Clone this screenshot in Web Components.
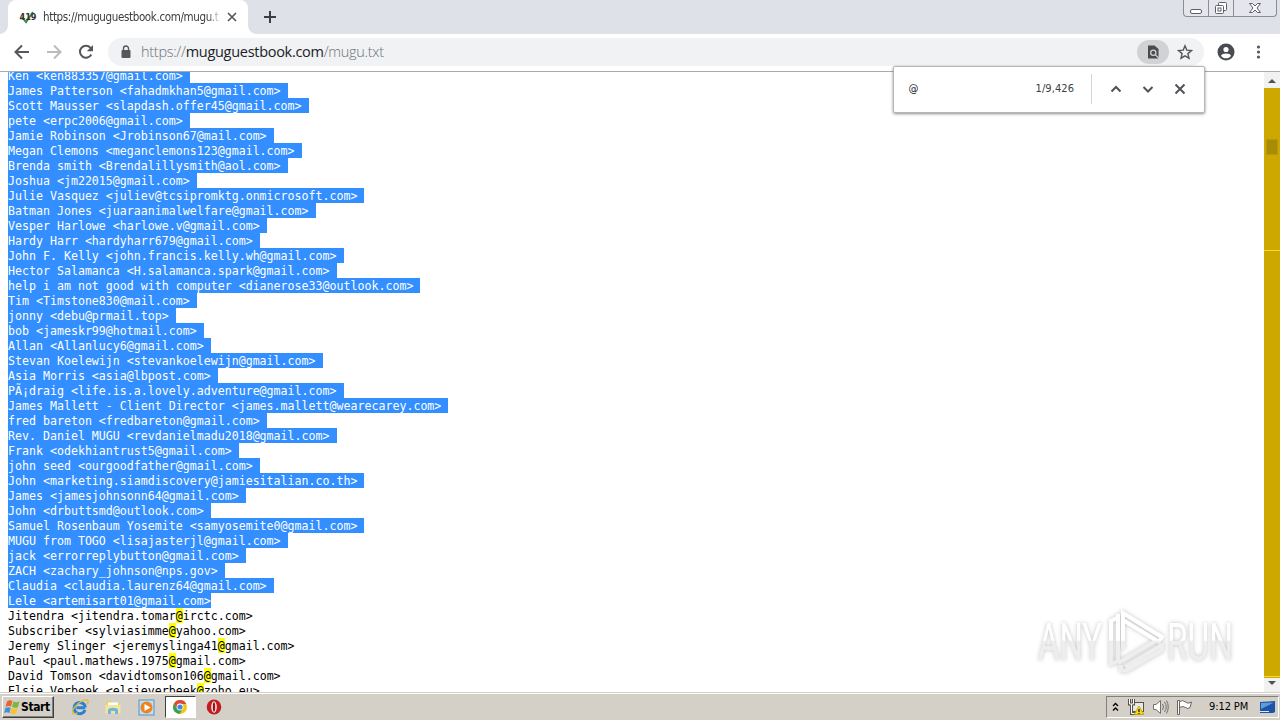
<!DOCTYPE html>
<html lang="en">
<head>
<meta charset="utf-8">
<title>mugu.txt</title>
<style>
  html, body { margin: 0; width: 1280px; height: 720px; overflow: hidden; background: #fff; }
</style>
</head>
<body>
<browser-desktop></browser-desktop>

<script>
class TabStrip extends HTMLElement {
  constructor() {
    super();
    this.attachShadow({ mode: "open" });
  }

  connectedCallback() {
    this.shadowRoot.innerHTML = /* html */`
      <style>
        :host {
          display: flex;
          height: 34px;
          background: #dee1e8;
          font: 12px/16px "DejaVu Sans Condensed", "DejaVu Sans", sans-serif;
          font-stretch: condensed;
        }
        .corner { width: 8px; align-self: flex-end; height: 8px; }
        .corner.left { background: radial-gradient(circle at 0 0, transparent 7.5px, #fff 8px); }
        .corner.right { background: radial-gradient(circle at 100% 0, transparent 7.5px, #fff 8px); }
        .tab {
          box-sizing: border-box;
          display: flex;
          align-items: center;
          width: 240px;
          padding: 0 10px 0 11px;
          border-radius: 8px 8px 0 0;
          background: #fff;
          color: #3a3c40;
        }
        .tab .title {
          width: 176px;
          margin-left: 6px;
          overflow: hidden;
          white-space: nowrap;
          font-size: 11.5px;
          letter-spacing: -.36px;
          -webkit-mask-image: linear-gradient(90deg, #000 165px, transparent 178px);
        }
        .tab .icon, .tab .close { flex: none; }
        .tab .close { margin-left: 7px; }
        .plus { margin: 10px 0 0 6px; }
        .controls {
          display: grid;
          grid-template-columns: 25px 25px 42px;
          box-sizing: border-box;
          width: 94px;
          height: 17px;
          margin: 0 3px 0 auto;
          border: 1px solid #898d98;
          border-top: 0;
          border-radius: 0 0 4px 4px;
          background: #e4e6ec;
        }
        .controls span { display: grid; place-items: center; border-right: 1px solid #898d98; }
        .controls span:last-child { border: 0; }
      </style>
      <div class="corner left"></div>
      <div class="tab">
        <svg class="icon" width="18" height="16" viewBox="0 0 18 16">
          <path d="M3 8l4 5 7-10" fill="none" stroke="#3d8a3d" stroke-width="2"/>
          <text x="0.5" y="11" font-size="9" font-weight="bold" textLength="17" lengthAdjust="spacingAndGlyphs" fill="#333">419</text>
        </svg>
        <div class="title">https://muguguestbook.com/mugu.txt</div>
        <svg class="close" width="12" height="12" viewBox="0 0 12 12"><path d="M2 2l8 8M10 2l-8 8" stroke="#55585d" stroke-width="1.7"/></svg>
      </div>
      <div class="corner right"></div>
      <svg class="plus" width="16" height="14" viewBox="0 0 16 14"><path d="M8 1v12M2 7h12" stroke="#3b3e43" stroke-width="2"/></svg>
      <div class="controls">
        <span><svg width="14" height="14"><rect x="1.5" y="8.5" width="11" height="4" rx="1.5" fill="#fff" stroke="#5b606c"/></svg></span>
        <span><svg width="14" height="14" fill="#fff" stroke="#5b606c"><rect x="4.5" y="1.5" width="8" height="8" rx="1"/><rect x="1.5" y="4.5" width="8" height="8" rx="1"/><rect x="4" y="7" width="3" height="3"/></svg></span>
        <span><svg width="14" height="14"><path d="M1.500 2.500h3l2.500 2.500 2.500-2.500h3l-3.500 4.500 3.500 4.500h-3l-2.500-2.500-2.500 2.500h-3l3.500-4.500z" fill="#fff" stroke="#5b606c"/></svg></span>
      </div>
    `;
  }
}

class NavBar extends HTMLElement {
  constructor() {
    super();
    this.attachShadow({ mode: "open" });
  }

  connectedCallback() {
    this.shadowRoot.innerHTML = /* html */`
      <style>
        :host {
          display: flex;
          box-sizing: border-box;
          align-items: center;
          height: 38px;
          padding: 0 12px 2px;
          background: #fff;
          border-bottom: 1px solid #a9abae;
          font: 14.500px/20px "Open Sans", "Noto Sans", sans-serif;
        }
        svg { display: block; flex: none; }
        .nav { display: flex; gap: 12px; }
        .address {
          display: flex;
          align-items: center;
          box-sizing: border-box;
          height: 28px;
          flex: 1;
          margin: 0 13px 0 12px;
          padding: 0 11px 0 10px;
          border-radius: 14px;
          background: #f0f2f4;
        }
        .url {
          flex: 1;
          margin-left: 7px;
          white-space: nowrap;
          font-weight: 300;
          letter-spacing: -.29px;
          color: #6d7176;
        }
        .url b { font-weight: 400; color: #202124; }
        .find {
          display: grid;
          place-items: center;
          width: 32px;
          height: 24px;
          margin-right: 8px;
          border-radius: 12px;
          background: #d0d2d4;
        }
        .dots { margin-left: 12px; }
      </style>
      <div class="nav">
        <svg width="20" height="20" viewBox="0 0 20 20" fill="none" stroke="#54575c" stroke-width="2"><path d="M17 10H4M10 3.500L3.500 10l6.500 6.500"/></svg>
        <svg width="20" height="20" viewBox="0 0 20 20" fill="none" stroke="#b9bbbe" stroke-width="2"><path d="M3 10h13M10 3.500l6.500 6.500-6.500 6.500"/></svg>
        <svg width="20" height="20" viewBox="0 0 20 20"><path d="M15.300 12.500A6 6 0 1 1 14.500 5.800l1 1.200" fill="none" stroke="#54575c" stroke-width="2"/><path d="M17 3v6.200h-6.200z" fill="#54575c"/></svg>
      </div>
      <div class="address">
        <svg width="16" height="16" viewBox="0 0 16 16"><rect x="3.500" y="6" width="9" height="8" rx="1" fill="#54575c"/><path d="M5.500 7V4.500a2.500 2.500 0 0 1 5 0V7" fill="none" stroke="#54575c" stroke-width="1.400"/></svg>
        <span class="url">https://<b>muguguestbook.com</b>/mugu.txt</span>
        <span class="find">
          <svg width="16" height="16" viewBox="0 0 16 16"><path d="M3 1.500h6.500L13.500 5v9.500H3z" fill="#484b50"/><circle cx="8.300" cy="8.700" r="2.600" fill="none" stroke="#d0d2d4" stroke-width="1.300"/><path d="M10.200 10.600l4 4" stroke="#d0d2d4" stroke-width="1.300"/></svg>
        </span>
        <svg width="16" height="16" viewBox="0 0 16 16"><path d="M8 1.800l1.800 4.300 4.700.4-3.600 3.100 1.100 4.600L8 11.800l-4 2.400 1.100-4.600-3.600-3.100 4.700-.4z" fill="none" stroke="#54575c" stroke-width="1.400"/></svg>
      </div>
      <svg width="18" height="18" viewBox="0 0 18 18"><circle cx="9" cy="9" r="8.500" fill="#484b50"/><circle cx="9" cy="6.500" r="2.600" fill="#fff"/><path d="M4 12.700C5 9.900 13 9.900 14 12.700c-2.500 3.500-7.500 3.500-10 0z" fill="#fff"/></svg>
      <svg class="dots" width="21" height="18" viewBox="0 0 21 18" fill="#54575c"><circle cx="11.500" cy="4" r="1.600"/><circle cx="11.500" cy="9" r="1.600"/><circle cx="11.500" cy="14" r="1.600"/></svg>
    `;
  }
}

class FindBar extends HTMLElement {
  constructor() {
    super();
    this.attachShadow({ mode: "open" });
  }

  connectedCallback() {
    this.shadowRoot.innerHTML = /* html */`
      <style>
        :host {
          display: flex;
          align-items: center;
          box-sizing: border-box;
          width: 312px;
          height: 47px;
          padding: 0 16px 2px 15px;
          border: 1px solid #b4b6b8;
          border-radius: 2px;
          background: #fff;
          box-shadow: 0 1px 3px rgba(0, 0, 0, .45);
          color: #3c4043;
          font: 11px/16px "DejaVu Sans Condensed", "DejaVu Sans", sans-serif;
          font-stretch: condensed;
        }
        .query { flex: 1; color: #202124; }
        .count { width: 39px; white-space: nowrap; letter-spacing: .1px; }
        .rule { width: 1px; height: 30px; margin: 0 16px; background: #d5d7da; }
        .buttons { display: flex; gap: 16px; }
        svg { display: block; fill: none; stroke: #505357; stroke-width: 2; }
      </style>
      <span class="query">@</span>
      <span class="count">1/9,426</span>
      <i class="rule"></i>
      <div class="buttons">
        <svg width="16" height="16"><path d="M3.500 10.500L8 6l4.500 4.500"/></svg>
        <svg width="16" height="16"><path d="M3.500 6L8 10.500 12.500 6"/></svg>
        <svg width="16" height="16"><path d="M3.500 3.500l9 9M12.500 3.500l-9 9"/></svg>
      </div>
    `;
  }
}

class TextPage extends HTMLElement {
  constructor() {
    super();
    this.attachShadow({ mode: "open" });
  }

  static get selected() {
    return [
      "Ken <ken883357@gmail.com>",
      "James Patterson <fahadmkhan5@gmail.com>",
      "Scott Mausser <slapdash.offer45@gmail.com>",
      "pete <erpc2006@gmail.com>",
      "Jamie Robinson <Jrobinson67@mail.com>",
      "Megan Clemons <meganclemons123@gmail.com>",
      "Brenda smith <Brendalillysmith@aol.com>",
      "Joshua <jm22015@gmail.com>",
      "Julie Vasquez <juliev@tcsipromktg.onmicrosoft.com>",
      "Batman Jones <juaraanimalwelfare@gmail.com>",
      "Vesper Harlowe <harlowe.v@gmail.com>",
      "Hardy Harr <hardyharr679@gmail.com>",
      "John F. Kelly <john.francis.kelly.wh@gmail.com>",
      "Hector Salamanca <H.salamanca.spark@gmail.com>",
      "help i am not good with computer <dianerose33@outlook.com>",
      "Tim <Timstone830@mail.com>",
      "jonny <debu@prmail.top>",
      "bob <jameskr99@hotmail.com>",
      "Allan <Allanlucy6@gmail.com>",
      "Stevan Koelewijn <stevankoelewijn@gmail.com>",
      "Asia Morris <asia@lbpost.com>",
      "PÃ¡draig <life.is.a.lovely.adventure@gmail.com>",
      "James Mallett - Client Director <james.mallett@wearecarey.com>",
      "fred bareton <fredbareton@gmail.com>",
      "Rev. Daniel MUGU <revdanielmadu2018@gmail.com>",
      "Frank <odekhiantrust5@gmail.com>",
      "john seed <ourgoodfather@gmail.com>",
      "John <marketing.siamdiscovery@jamiesitalian.co.th>",
      "James <jamesjohnsonn64@gmail.com>",
      "John <drbuttsmd@outlook.com>",
      "Samuel Rosenbaum Yosemite <samyosemite0@gmail.com>",
      "MUGU from TOGO <lisajasterjl@gmail.com>",
      "jack <errorreplybutton@gmail.com>",
      "ZACH <zachary_johnson@nps.gov>",
      "Claudia <claudia.laurenz64@gmail.com>",
      "Lele <artemisart01@gmail.com>"
    ];
  }

  static get plain() {
    return [
      "Jitendra <jitendra.tomar@irctc.com>",
      "Subscriber <sylviasimme@yahoo.com>",
      "Jeremy Slinger <jeremyslinga41@gmail.com>",
      "Paul <paul.mathews.1975@gmail.com>",
      "David Tomson <davidtomson106@gmail.com>",
      "Elsie Verbeek <elsieverbeek@zoho.eu>"
    ];
  }

  escape(line) {
    return line.replace(/</g, "&lt;").replace(/>/g, "&gt;");
  }

  connectedCallback() {
    const selected = TextPage.selected.map((line, i, all) =>
      `<div><span class="sel">${this.escape(line)}${i < all.length - 1 ? " " : ""}</span></div>`);
    const plain = TextPage.plain.map(line =>
      `<div>${this.escape(line).replace("@", "<mark>@</mark>")}</div>`);

    this.shadowRoot.innerHTML = /* html */`
      <style>
        :host {
          display: flex;
          flex-direction: column;
          justify-content: flex-end;
          box-sizing: border-box;
          height: 620px;
          padding-left: 8px;
          overflow: hidden;
          background: #fff;
          color: #000;
          font: 11.627px/17px "DejaVu Sans Mono", monospace;
        }
        /* the last line runs under the taskbar */
        .lines { flex: none; margin-bottom: -6px; white-space: pre; }
        .lines div { height: 15px; }
        .sel { display: inline-block; height: 15px; background: #338fff; color: #fff; }
        mark { display: inline-block; height: 15px; background: #ff0; color: #000; }
      </style>
      <div class="lines">${selected.join("")}${plain.join("")}</div>
    `;
  }
}

class ScrollTrack extends HTMLElement {
  constructor() {
    super();
    this.attachShadow({ mode: "open" });
  }

  connectedCallback() {
    this.shadowRoot.innerHTML = /* html */`
      <style>
        :host { display: grid; grid-template-rows: 16px 1fr 14px; width: 16px; height: 620px; background: #f1f1f1; }
        svg { display: block; }
        .track {
          display: grid;
          grid-template-rows: 51px 16px 95px 1px 1fr 1px 1px;
          background: #cda900;
        }
        .thumb { margin: 0 2px; background: #a88c08; border: 1px solid #b89806; box-sizing: border-box; }
        .mark { background: #f5dc35; }
      </style>
      <svg width="16" height="16"><path d="M4 11h8L8 7z" fill="#505050"/></svg>
      <div class="track"><i></i><i class="thumb"></i><i></i><i class="mark"></i><i></i><i class="mark"></i><i></i></div>
      <svg width="16" height="14"><path d="M4 3h8L8 7z" fill="#505050"/></svg>
    `;
  }
}

class WaterMark extends HTMLElement {
  constructor() {
    super();
    this.attachShadow({ mode: "open" });
  }

  connectedCallback() {
    this.shadowRoot.innerHTML = /* html */`
      <style>
        :host { display: block; width: 204px; height: 72px; }
        svg { display: block; filter: drop-shadow(0 0 2px rgba(0, 0, 0, .24)); }
        text { font: 52px Roboto, sans-serif; }
      </style>
      <svg width="204" height="72" viewBox="0 0 204 72">
        <defs>
          <linearGradient id="fade" x1="0" y1="0" x2="0" y2="70" gradientUnits="userSpaceOnUse">
            <stop offset=".49" stop-color="#fff"/><stop offset=".5" stop-color="#eee"/>
          </linearGradient>
        </defs>
        <g fill="url(#fade)">
          <text x="3" y="54" textLength="64" lengthAdjust="spacingAndGlyphs">ANY</text>
          <text x="132" y="54" textLength="66" lengthAdjust="spacingAndGlyphs">RUN</text>
        </g>
        <g fill="none" stroke="url(#fade)" stroke-width="4">
          <path d="M82 12l-6 3v43l7-3"/>
          <path d="M83 57V8"/>
          <path d="M88 43V7l39 24-3 5-36-22"/>
          <path d="M83 57l39-23M86 59v5l5 1 36-21v-5L90 61"/>
        </g>
      </svg>
    `;
  }
}

class TaskBar extends HTMLElement {
  constructor() {
    super();
    this.attachShadow({ mode: "open" });
  }

  connectedCallback() {
    this.shadowRoot.innerHTML = /* html */`
      <style>
        :host {
          display: flex;
          box-sizing: border-box;
          height: 28px;
          padding: 2px 1px 1px 2px;
          background: #d4d0c8;
          border-top: 1px solid #d4d0c8;
          box-shadow: inset 0 1px #fff;
          color: #000;
          font: 11px/16px "DejaVu Sans Condensed", "DejaVu Sans", sans-serif;
          font-stretch: condensed;
        }
        svg { display: block; flex: none; }
        .start {
          display: flex;
          align-items: center;
          box-sizing: border-box;
          width: 52px;
          height: 22px;
          margin-top: 1px;
          border: 1px solid;
          border-color: #fff #404040 #404040 #fff;
          box-shadow: inset -1px -1px #808080;
          font-weight: bold;
          font-size: 12px;
          letter-spacing: -.4px;
          white-space: nowrap;
        }
        .start svg { margin: 0 1px 0 1px; }
        .apps { display: flex; align-items: center; margin-left: 9px; }
        .apps span { display: grid; place-items: center; width: 33.500px; height: 22px; }
        .apps .active {
          box-sizing: border-box;
          width: 31px;
          margin: 0 2px 0 1px;
          background: #fff;
          border: 1px solid;
          border-color: #404040 #fff #fff #404040;
        }
        .tray {
          display: flex;
          align-items: center;
          box-sizing: border-box;
          width: 173px;
          height: 22px;
          margin: 1px 0 0 auto;
          padding: 0 2px 0 3px;
          border: 1px solid;
          border-color: #808080 #fff #fff #808080;
        }
        .tray .net { margin-left: 5px; }
        .tray .vol { margin-left: 7px; }
        .tray .flag { margin-left: 7px; }
        .clock { margin-left: 16px; width: 40px; white-space: nowrap; letter-spacing: -.1px; }
        .show { margin-left: auto; }
      </style>
      <div class="start">
        <svg width="16" height="16" viewBox="0 0 16 16">
          <path d="M3 2.500C5 1 6.500 1 8.500 2L7 7.500C5 6.500 3.500 6.800 1.500 8z" fill="#e9652d"/>
          <path d="M9.500 2.500c2 1 3.500 1 6 0L14 8c-2 1.200-4 1-6 0z" fill="#79b83c"/>
          <path d="M1.300 9C3 8 5 7.800 6.700 8.700L5.500 14C3.500 13 2 13 .2 14z" fill="#438fd6"/>
          <path d="M7.700 9c2 1 4 1.200 6 0l-1.500 5.300c-2 1.300-4 1-6 0z" fill="#f5c52e"/>
        </svg>Start
      </div>
      <div class="apps">
        <span><svg width="18" height="18" viewBox="0 0 18 18">
          <path d="M14.300 9.800H5.500M14 12A5.600 5.600 0 1 1 14.300 9.500" fill="none" stroke="#2b82d0" stroke-width="3"/>
          <path d="M2 15.500C-.5 11 10 1.500 16 2c2 .5 1 3 0 4.500M2 15.500c1 1 3 .3 4.500-.7" fill="none" stroke="#e6b93b" stroke-width="1.300"/>
        </svg></span>
        <span><svg width="18" height="18" viewBox="0 0 18 18">
          <path d="M2 3h6l1 2h7v10H2z" fill="#e9cf72"/><path d="M4 4.500h10V9H4z" fill="#fff"/>
          <path d="M1.500 7h15v8.500h-15z" fill="#f6e49b"/><path d="M4 16v-4c0-3 10-3 10 0v4h-3v-3H7v3z" fill="#70b6dd"/>
        </svg></span>
        <span><svg width="17" height="17" viewBox="0 0 17 17">
          <rect x="1" y="1" width="15" height="15" fill="#c1def3" stroke="#5394c8"/><circle cx="8.500" cy="8.500" r="6" fill="#ed8420"/><path d="M6.500 5l6 3.500-6 3.500z" fill="#fff"/>
        </svg></span>
        <span class="active"><svg width="16" height="16" viewBox="0 0 16 16">
          <circle cx="8" cy="8" r="7" fill="#f5c61a"/><path d="M2 4.400A7 7 0 0 1 14.300 5H8L5 9.700z" fill="#dd4838"/><path d="M2 4.400a7 7 0 0 0 5.500 10.600L11 9.500 5 9.700z" fill="#36a056"/><circle cx="8" cy="8" r="3.400" fill="#fff"/><circle cx="8" cy="8" r="2.600" fill="#4586e8"/>
        </svg></span>
        <span><svg width="16" height="16" viewBox="0 0 16 16">
          <ellipse cx="8" cy="8" rx="7.300" ry="7.500" fill="#c01e20"/><ellipse cx="8" cy="8" rx="2.800" ry="5.800" fill="#f7e9e7"/><ellipse cx="8" cy="8" rx="1.200" ry="4.800" fill="#9c1316"/>
        </svg></span>
      </div>
      <div class="tray">
        <svg width="12" height="14" fill="none" stroke="#000" stroke-width="1.400"><path d="M3 6l2.500-2.500L8 6M3 10.500L5.500 8 8 10.500"/></svg>
        <svg class="net" width="18" height="18" viewBox="0 0 18 18">
          <rect x="5.500" y="4.500" width="11" height="9" fill="#e8e8e2" stroke="#55534d"/><path d="M2.500 1v5h4V1M4.500 6v9.500h5" fill="none" stroke="#55534d" stroke-width="3"/><path d="M2.500 1v5h4V1M4.500 6v9.500h5" fill="none" stroke="#fff"/>
          <path d="M12 8l5 8.500H7z" fill="#f5d514" stroke="#b79500" stroke-width=".7"/><path d="M12 11v3M12 15v1" stroke="#222" stroke-width="1.300"/>
        </svg>
        <svg class="vol" width="17" height="16" viewBox="0 0 17 16" fill="none" stroke="#74716b"><path d="M1.500 5.500H4L8.500 1.500v13L4 10.500H1.500z" fill="#fff"/><path d="M10.500 5q2 3 0 6M12.500 3q3.500 5 0 10M14.500 1.500q3.500 6.500 0 13"/></svg>
        <svg class="flag" width="17" height="18" viewBox="0 0 17 18" fill="#fff" stroke="#686560"><path d="M3.500 3.500Q7 1.500 9.500 4t6 0L14 9.500q-2 2-4.500 0t-6 0"/><path d="M1.500 2.500h2v14h-2z"/></svg>
        <span class="clock">9:12 PM</span>
        <svg class="show" width="17" height="16" viewBox="0 0 17 16"><path d="M1 3l15-1v11l-2 1H1z" fill="#1c55a5"/><path d="M2 4l13-.5L2 10z" fill="#5e9bd9"/><path d="M1 12.500h9" stroke="#dae8f4"/></svg>
      </div>
    `;
  }
}

class BrowserDesktop extends HTMLElement {
  constructor() {
    super();
    this.attachShadow({ mode: "open" });
  }

  connectedCallback() {
    this.shadowRoot.innerHTML = /* html */`
      <style>
        :host { display: flex; flex-direction: column; position: relative; width: 1280px; height: 720px; overflow: hidden; }
        .view { display: grid; grid-template-columns: 1fr 16px; height: 620px; }
        find-bar { position: absolute; top: 66px; right: 75.500px; }
        water-mark { position: absolute; left: 1035px; top: 606px; }
      </style>
      <tab-strip></tab-strip>
      <nav-bar></nav-bar>
      <div class="view"><text-page></text-page><scroll-track></scroll-track></div>
      <task-bar></task-bar>
      <find-bar></find-bar>
      <water-mark></water-mark>
    `;
  }
}

customElements.define("tab-strip", TabStrip);
customElements.define("nav-bar", NavBar);
customElements.define("find-bar", FindBar);
customElements.define("text-page", TextPage);
customElements.define("scroll-track", ScrollTrack);
customElements.define("water-mark", WaterMark);
customElements.define("task-bar", TaskBar);
customElements.define("browser-desktop", BrowserDesktop);
</script>
</body>
</html>
